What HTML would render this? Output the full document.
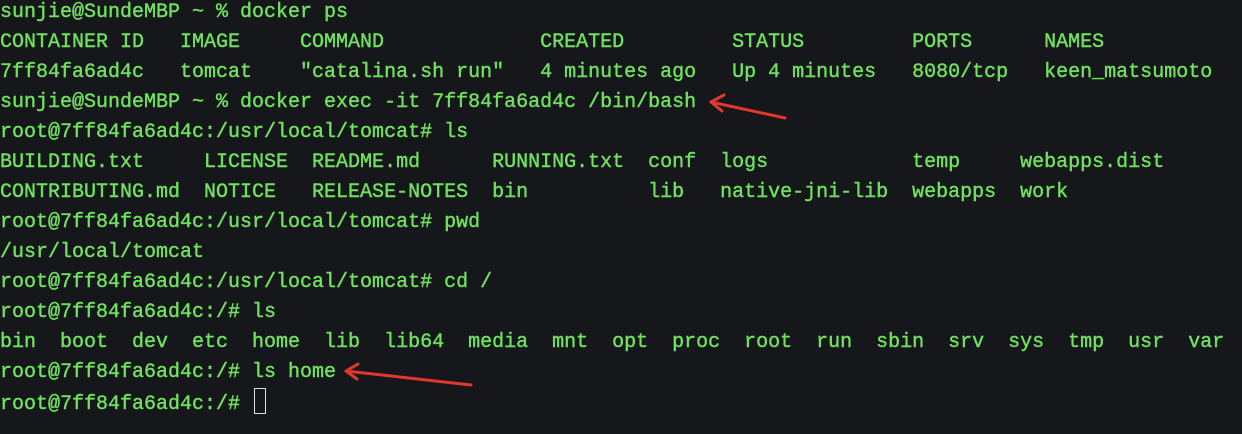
<!DOCTYPE html>
<html><head><style>
html,body{margin:0;padding:0;background:#16171b;width:1242px;height:434px;overflow:hidden}
pre{position:absolute;left:0;top:-2px;margin:0;font-family:"Liberation Mono",monospace;font-size:20px;line-height:30px;color:#6fe25e;-webkit-text-stroke:0.4px #6fe25e;white-space:pre}
.cur{display:inline-block;width:10px;height:24px;border:1.5px solid #ddd;vertical-align:-5px;margin-left:2px}
svg{position:absolute;left:0;top:0}
</style></head><body>
<pre>sunjie@SundeMBP ~ % docker ps
CONTAINER ID   IMAGE     COMMAND             CREATED         STATUS         PORTS      NAMES
7ff84fa6ad4c   tomcat    "catalina.sh run"   4 minutes ago   Up 4 minutes   8080/tcp   keen_matsumoto
sunjie@SundeMBP ~ % docker exec -it 7ff84fa6ad4c /bin/bash
root@7ff84fa6ad4c:/usr/local/tomcat# ls
BUILDING.txt     LICENSE  README.md      RUNNING.txt  conf  logs            temp     webapps.dist
CONTRIBUTING.md  NOTICE   RELEASE-NOTES  bin          lib   native-jni-lib  webapps  work
root@7ff84fa6ad4c:/usr/local/tomcat# pwd
/usr/local/tomcat
root@7ff84fa6ad4c:/usr/local/tomcat# cd /
root@7ff84fa6ad4c:/# ls
bin  boot  dev  etc  home  lib  lib64  media  mnt  opt  proc  root  run  sbin  srv  sys  tmp  usr  var
root@7ff84fa6ad4c:/# ls home
root@7ff84fa6ad4c:/# <span class="cur"></span></pre>
<svg width="1242" height="434">
<g stroke="#e0382c" stroke-width="3" fill="none" stroke-linecap="round" stroke-linejoin="round">
<path d="M785 118 L711 102"/><path d="M724 95 L711 102 L722 111"/>
<path d="M471 385 L346 371"/><path d="M358 364 L346 371 L357 379"/>
</g></svg>
</body></html>
